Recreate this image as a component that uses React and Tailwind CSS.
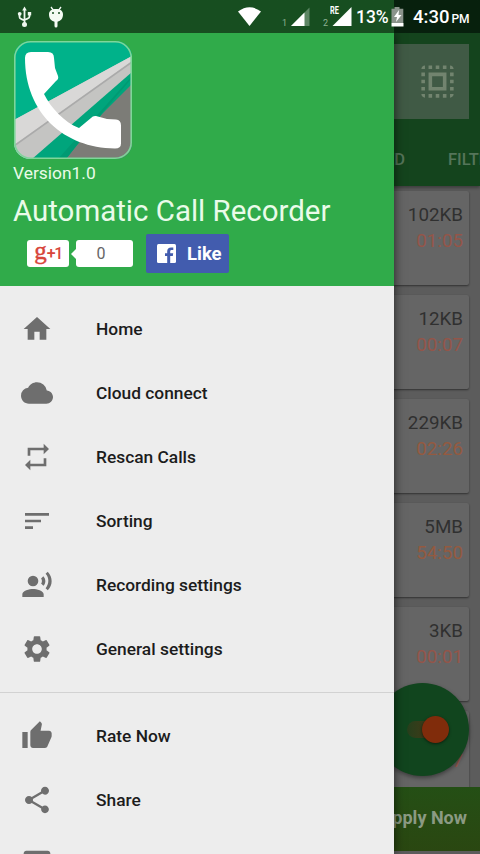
import React from 'react';
import {
  MdCloud,
  MdFeedback,
  MdRecordVoiceOver,
  MdRepeat,
  MdSelectAll,
  MdSettings,
  MdShare,
  MdSort,
  MdThumbUp,
} from 'react-icons/md';

const HomeIcon = ({ className }) => (
  <svg viewBox="0 0 24 24" fill="currentColor" className={className}>
    <path d="M10 20v-6h4v6h5v-8h3L12 3 2 12h3v8z" />
  </svg>
);

const mainItems = [
  { label: 'Home', icon: HomeIcon },
  { label: 'Cloud connect', icon: MdCloud },
  { label: 'Rescan Calls', icon: MdRepeat },
  { label: 'Sorting', icon: MdSort },
  { label: 'Recording settings', icon: MdRecordVoiceOver },
  { label: 'General settings', icon: MdSettings },
];

const moreItems = [
  { label: 'Rate Now', icon: MdThumbUp },
  { label: 'Share', icon: MdShare },
  { label: '', icon: MdFeedback },
];

const calls = [
  { size: '102KB', time: '01:05', color: 'text-[#945549]' },
  { size: '12KB', time: '00:07', color: 'text-[#945549]' },
  { size: '229KB', time: '02:26', color: 'text-[#945a40]' },
  { size: '5MB', time: '54:50', color: 'text-[#945a40]' },
  { size: '3KB', time: '00:01', color: 'text-[#945549]' },
  { size: '1MB', time: '04:17', color: 'text-[#945549]' },
];

const StatusBar = () => (
  <div className="relative z-20 flex h-[33px] w-full shrink-0 bg-linear-to-r from-[#174e20] from-[394px] to-[#07200d] to-[394px] text-white">
    <svg viewBox="0 0 480 33" className="absolute inset-0 h-full w-full" fill="none">
      {/* USB */}
      <path
        d="M24.500 9v15M19.500 14v3q0 1.500 2 2.200l3 1.300M29.500 13v3.500q0 1.500-2 2.200l-3 1.300"
        stroke="#eef8ee"
        strokeWidth="1.800"
      />
      <g fill="#eef8ee">
        <path d="M24.500 6.500l2.300 4h-4.600z" />
        <circle cx="24.500" cy="24.500" r="2.500" />
        <circle cx="19.700" cy="13.800" r="1.900" />
        <path d="M27.800 12h3.400v3.400h-3.400z" />
      </g>
      {/* Debug bug */}
      <path d="M51 7l2.500 3.500M61 7l-2.500 3.500" stroke="#f4fbf4" strokeWidth="1.300" />
      <path d="M49 14.500C49 10.500 52 9 56 9s7 1.500 7 5.500c0 3.500-2 6.500-5.500 7.200V26q0 1.500-1.500 1.500T54.500 26v-4.300C51 21 49 18 49 14.500z" fill="#f4fbf4" />
      <circle cx="53" cy="13" r="1" fill="#174e20" />
      <circle cx="59" cy="13" r="1" fill="#174e20" />
      {/* Wifi */}
      <path d="M238 11.500Q249.500 3 261 11.500L249.500 26z" fill="#fff" />
      {/* Signals */}
      <path d="M309.500 7.500V26H291z" fill="#5d8664" />
      <path d="M304.500 12.500V26H291z" fill="#fff" />
      <path d="M351.500 7V26H332.500z" fill="#fff" />
      {/* Battery */}
      <path d="M394.500 7h5v1.800h3.800V23H391.500V8.800h3z" fill="#8b948c" />
      <path d="M391.500 23H403.500V26.500H391.500z" fill="#fff" />
      <path d="M399 10l-5 7h3l-1 5 5.500-7h-3z" fill="#fff" />
    </svg>
    <span className="absolute left-[282px] top-[18px] text-[9px] leading-[10px] text-[#8db092]">1</span>
    <span className="absolute left-[323px] top-[18px] text-[9px] leading-[10px] text-[#8db092]">2</span>
    <span className="absolute left-[330px] top-[6px] origin-left scale-x-[.7] text-[10.500px] font-bold leading-[10px]">RE</span>
    <span className="absolute left-[356px] top-[5px] origin-left scale-x-[.97] text-[18px] font-medium leading-[23px]">13%</span>
    <div className="absolute left-[413px] top-[6px] flex items-baseline gap-[2px] whitespace-nowrap font-medium leading-[23px]">
      <span className="text-[18.500px]">4:30</span>
      <span className="text-[12px] leading-4">PM</span>
    </div>
  </div>
);

const CallList = () => (
  <div className="flex h-[821px] w-full flex-col bg-[#5c5c5c]">
    <div className="h-[153px] shrink-0 bg-[#14441d] pt-[11px] shadow-[0_2px_3px_#00000055]">
      <div className="ml-auto mr-[11px] flex h-[75px] w-[100px] items-center justify-end bg-[#405a45] pr-[10px]">
        <MdSelectAll className="h-[43px] w-[43px] text-[#72846f]" />
      </div>
      <div className="mt-[31px] flex justify-end text-[16.500px] font-medium leading-5 text-[#55755a]">
        <span>RECORDED</span>
        <span className="-mr-[26px] ml-[43px] w-[58px]">FILTER</span>
      </div>
    </div>
    <div className="flex h-[601px] shrink-0 flex-col gap-2.5 overflow-hidden pl-2.5 pr-[11px] pt-[5px]">
      {calls.map((call) => (
        <div
          key={call.time}
          className="h-[94px] shrink-0 rounded-xs bg-[#656565] pr-[6px] pt-[11px] text-right text-[18.800px] leading-[26px] shadow-[0_1px_2px_#00000077]"
        >
          <div className="text-[#303030]">{call.size}</div>
          <div className={call.color}>{call.time}</div>
        </div>
      ))}
    </div>
    <div className="h-16 shrink-0 bg-linear-to-b from-[#244f15] to-[#2a4711] pr-[13px] text-right text-[18px] font-bold leading-[61px] text-[#8b9a83]">
      Apply Now
    </div>
  </div>
);

const RecordToggle = () => (
  <div className="absolute left-[376px] top-[683px] flex h-[93px] w-[93px] items-center rounded-full bg-[#11451e] shadow-[0_2px_4px_#00000066]">
    <div className="ml-[31px] flex h-[17px] w-[38px] items-center justify-end rounded-full bg-linear-to-r from-[#263f1c] to-[#4e3514]">
      <div className="-mr-1 h-[27px] w-[27px] shrink-0 rounded-full bg-[#802c0b] shadow-[0_1px_3px_#00000088]" />
    </div>
  </div>
);

const AppLogo = () => (
  <svg viewBox="0 0 118 118" className="ml-px h-[118px] w-[118px]">
    <defs>
      <clipPath id="tile">
        <rect width="118" height="118" rx="16" />
      </clipPath>
    </defs>
    <g clipPath="url(#tile)">
      <path d="M0 0h118v118H0z" fill="#00b28a" />
      <path d="M118 37L50 118h68z" fill="#7c7c77" />
      <path d="M118 29L18 118h34L88 73l30-30z" fill="#00a57c" />
      <path d="M118 35L44 118h8L84 77l34-40z" fill="#009a73" />
      <path d="M0 79L118 15v16L18 118H0z" fill="#c4c4c2" />
      <path d="M0 79L118 15v5L0 104z" fill="#d9d8d7" />
      <path d="M0 104L118 20v2L0 106z" fill="#aaa" />
    </g>
    <path
      d="M11 17q0-6 6-6h17q6 0 6 6l1 10 3 8q1 3-2 5L30 53c7 14 20 28 35 34l12-10q2-2.500 5-2l11 3 9 .5q5 .5 5 6v18q0 5-6 5C50 107 11 72 11 17z"
      fill="#fff"
    />
    <rect x=".8" y=".8" width="116.400" height="116.400" rx="16" fill="none" stroke="#7ed69a" strokeWidth="1.600" />
  </svg>
);

const DrawerHeader = () => (
  <div className="h-[253px] bg-[#30ab4a] pl-[13px] pt-2 text-[#eafbe9]">
    <AppLogo />
    <div className="mt-1 text-[17.400px] leading-5">Version1.0</div>
    <div className="mt-[10px] whitespace-nowrap text-[29.450px] leading-9">Automatic Call Recorder</div>
    <div className="mt-[6px] flex items-start">
      <div className="ml-3.5 mt-[5px] flex h-[27px] w-[42px] items-center justify-center rounded-[3px] bg-white text-[#d7453b]">
        <span className="-mt-1.5 font-['Liberation_Serif'] text-[25px] leading-6 [-webkit-text-stroke:0.4px_#d7453b]">g</span>
        <span className="text-[16px] font-medium tracking-[-1.500px]">+1</span>
      </div>
      <div className="relative ml-[7px] mt-[5px] flex h-[27px] w-[57px] items-center justify-center rounded-[3px] bg-white pr-[7px] text-[16px] text-[#666]">
        <svg viewBox="0 0 6 12" className="absolute -left-[5px] top-2 h-3 w-1.5" fill="#fff">
          <path d="M6 0v12L0 6z" />
        </svg>
        0
      </div>
      <div className="-mt-px ml-[13px] flex h-[39px] w-[83px] items-center rounded-xs bg-[#425cae] pl-[11px] text-white">
        <svg viewBox="0 0 19 19" className="h-[19px] w-[19px]">
          <rect width="19" height="19" rx="1.500" fill="#fff" />
          <path d="M10.200 19v-7H8V9.200h2.200V7.300c0-2.500 1.500-3.900 3.800-3.900h2.300v2.700h-1.600c-1.200 0-1.500.6-1.500 1.500v1.600h3l-.4 2.800h-2.600v7z" fill="#425cae" />
        </svg>
        <span className="ml-[11px] pt-0.5 text-[18.500px] font-bold">Like</span>
      </div>
    </div>
  </div>
);

const MenuItem = ({ label, icon: Icon }) => (
  <div className="flex h-16 items-center pl-[21px] text-[17.350px] font-medium text-[#1c1c1c]">
    <Icon className="h-8 w-8 text-[#6e6e6e]" />
    <span className="ml-[43px] leading-[26px]">{label}</span>
  </div>
);

const Drawer = () => (
  <div className="absolute left-0 top-[33px] z-10 h-[821px] w-[394px] overflow-hidden bg-[#ededed] shadow-[0_0_10px_#000000aa]">
    <DrawerHeader />
    <div className="pt-[11px]">
      {mainItems.map((item) => (
        <MenuItem key={item.label} {...item} />
      ))}
    </div>
    <div className="mt-[11px] border-t border-[#d2d2d2] pt-[11px]">
      {moreItems.map((item) => (
        <MenuItem key={item.label} {...item} />
      ))}
    </div>
  </div>
);

const App = () => (
  <div className="relative flex h-[854px] w-[480px] flex-col overflow-hidden font-[Roboto,sans-serif]">
    <StatusBar />
    <CallList />
    <RecordToggle />
    <Drawer />
  </div>
);

export default App;
